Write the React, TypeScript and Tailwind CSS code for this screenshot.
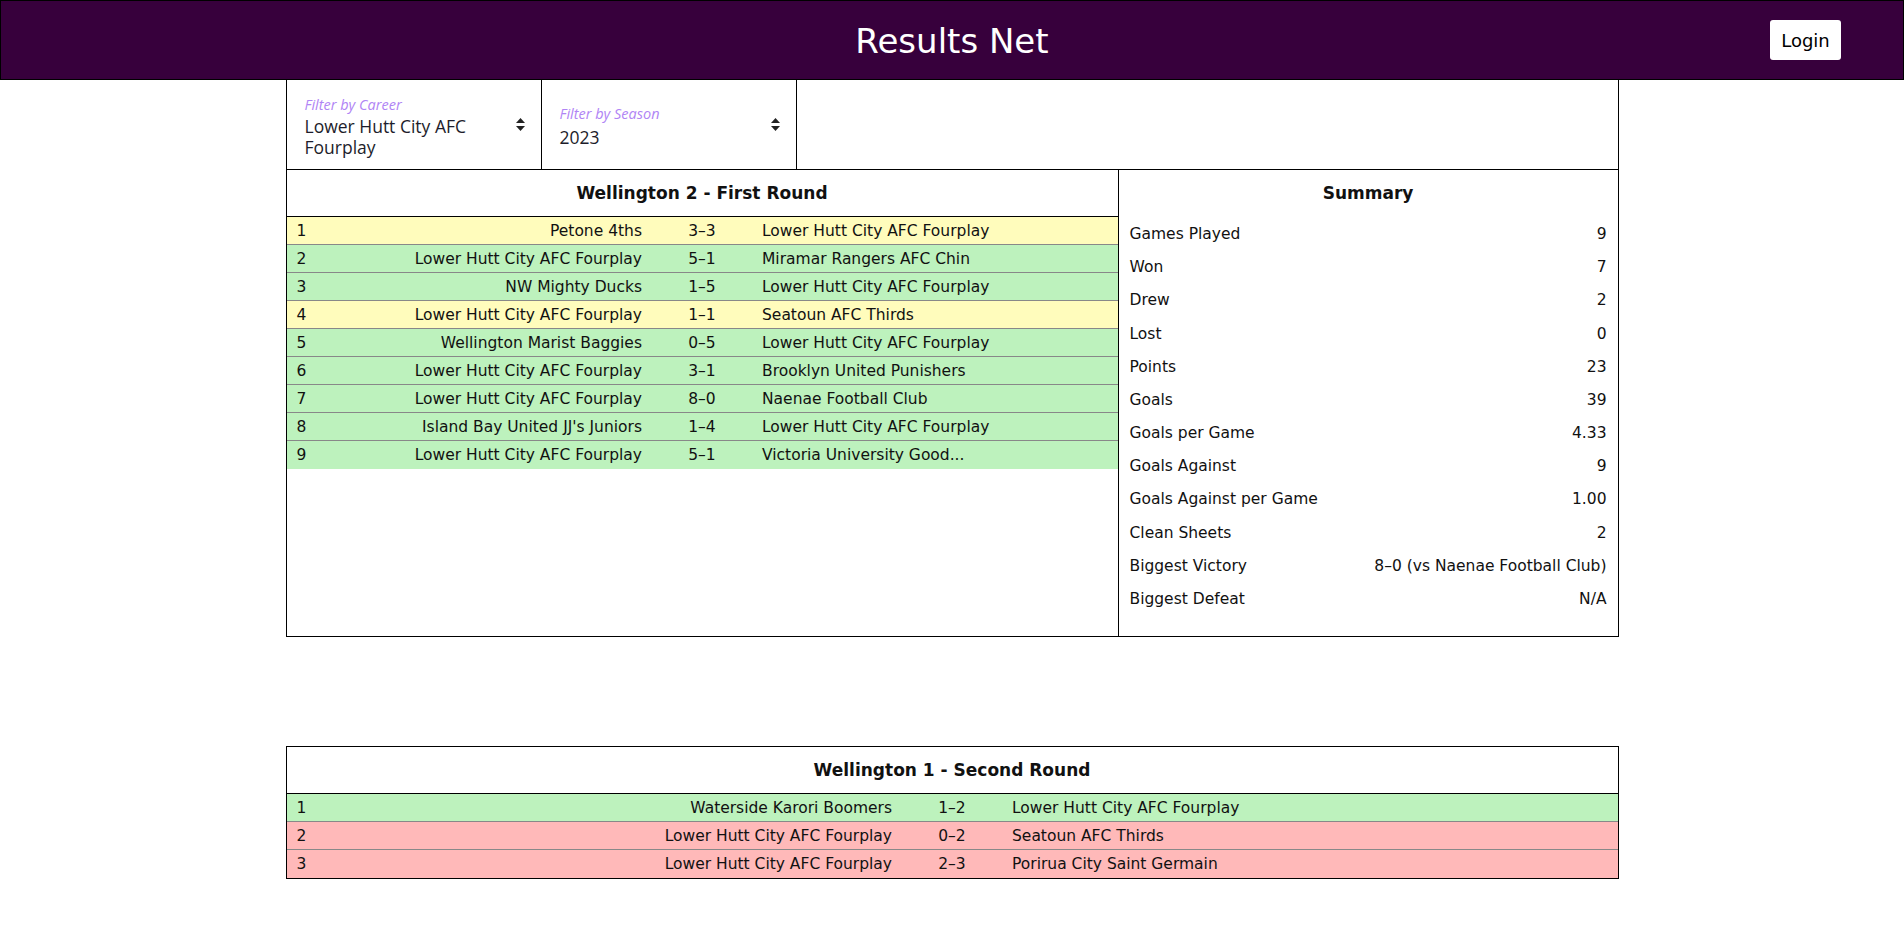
import React from "react";

type Match = { home: string; score: string; away: string; result: "W" | "D" | "L" };

const firstRound: Match[] = [
  { home: "Petone 4ths", score: "3–3", away: "Lower Hutt City AFC Fourplay", result: "D" },
  { home: "Lower Hutt City AFC Fourplay", score: "5–1", away: "Miramar Rangers AFC Chin", result: "W" },
  { home: "NW Mighty Ducks", score: "1–5", away: "Lower Hutt City AFC Fourplay", result: "W" },
  { home: "Lower Hutt City AFC Fourplay", score: "1–1", away: "Seatoun AFC Thirds", result: "D" },
  { home: "Wellington Marist Baggies", score: "0–5", away: "Lower Hutt City AFC Fourplay", result: "W" },
  { home: "Lower Hutt City AFC Fourplay", score: "3–1", away: "Brooklyn United Punishers", result: "W" },
  { home: "Lower Hutt City AFC Fourplay", score: "8–0", away: "Naenae Football Club", result: "W" },
  { home: "Island Bay United JJ's Juniors", score: "1–4", away: "Lower Hutt City AFC Fourplay", result: "W" },
  { home: "Lower Hutt City AFC Fourplay", score: "5–1", away: "Victoria University Good...", result: "W" },
];

const secondRound: Match[] = [
  { home: "Waterside Karori Boomers", score: "1–2", away: "Lower Hutt City AFC Fourplay", result: "W" },
  { home: "Lower Hutt City AFC Fourplay", score: "0–2", away: "Seatoun AFC Thirds", result: "L" },
  { home: "Lower Hutt City AFC Fourplay", score: "2–3", away: "Porirua City Saint Germain", result: "L" },
];

const summary = [
  ["Games Played", "9"],
  ["Won", "7"],
  ["Drew", "2"],
  ["Lost", "0"],
  ["Points", "23"],
  ["Goals", "39"],
  ["Goals per Game", "4.33"],
  ["Goals Against", "9"],
  ["Goals Against per Game", "1.00"],
  ["Clean Sheets", "2"],
  ["Biggest Victory", "8–0 (vs Naenae Football Club)"],
  ["Biggest Defeat", "N/A"],
];

function rowColor(r: Match["result"]) {
  if (r === "W") return "bg-[#bdf2bd]";
  if (r === "D") return "bg-[#fffcbc]";
  return "bg-[#ffb9b9]";
}

function SortArrows() {
  return (
    <svg width="9" height="13" viewBox="0 0 9 13" className="shrink-0">
      <path d="M4.5 0 L9 5 L0 5 Z" fill="#222" />
      <path d="M4.5 13 L9 8 L0 8 Z" fill="#222" />
    </svg>
  );
}

function MatchTable({ title, matches }: { title: string; matches: Match[] }) {
  return (
    <div>
      <div className="h-[47px] flex items-center justify-center border-b border-black font-bold text-[17px] pt-[1px]">
        {title}
      </div>
      {matches.map((m, i) => (
        <div key={i} className={`grid grid-cols-[1fr_100px_1fr] h-[28px] items-center border-b border-[#888] last:border-b-0 pt-[2px] ${rowColor(m.result)}`}>
          <div className="flex justify-between px-[10px]">
            <span>{i + 1}</span>
            <span className="truncate">{m.home}</span>
          </div>
          <div className="text-center">{m.score}</div>
          <div className="px-[10px] truncate">{m.away}</div>
        </div>
      ))}
    </div>
  );
}

export default function App() {
  return (
    <div className="min-h-screen bg-white text-[15.5px] text-[#111] font-['DejaVu_Sans',Verdana,sans-serif]">
      <header className="h-[80px] bg-[#37003c] border border-black flex items-center justify-center relative">
        <h1 className="text-white text-[34px] leading-none pt-[2px]">Results Net</h1>
        <button className="absolute right-[62px] top-[19px] w-[71px] h-[40px] bg-white rounded-[3px] text-[18px] text-black">
          Login
        </button>
      </header>

      <main className="w-[1333px] mx-auto">
        <div className="border-x border-b border-black">
          <div className="h-[90px] flex border-b border-black font-['Open_Sans','Noto_Sans',sans-serif]">
            <div className="w-[255px] border-r border-black flex items-center justify-between pl-[18px] pr-[16px]">
              <div className="pt-[4px]">
                <div className="text-[14.5px] italic text-[#b084f5] leading-[18px]">Filter by Career</div>
                <div className="mt-[2px] text-[17.5px] leading-[21px] text-[#1d1d2b]">
                  <div>Lower Hutt City AFC</div>
                  <div>Fourplay</div>
                </div>
              </div>
              <SortArrows />
            </div>
            <div className="w-[255px] border-r border-black flex items-center justify-between pl-[18px] pr-[16px]">
              <div className="pt-[4px]">
                <div className="text-[14.5px] italic text-[#b084f5] leading-[18px]">Filter by Season</div>
                <div className="mt-[3px] text-[17.5px] leading-[22px] text-[#1d1d2b]">2023</div>
              </div>
              <SortArrows />
            </div>
            <div className="flex-1" />
          </div>

          <div className="flex h-[466px]">
            <div className="w-[832px] border-r border-black">
              <MatchTable title="Wellington 2 - First Round" matches={firstRound} />
            </div>
            <div className="flex-1 px-[11px]">
              <div className="h-[47px] flex items-center justify-center font-bold text-[17px] pt-[1px]">Summary</div>
              <div className="flex flex-col pt-[1px]">
                {summary.map(([k, v]) => (
                  <div key={k} className="flex justify-between h-[33.2px] items-center">
                    <span>{k}</span>
                    <span>{v}</span>
                  </div>
                ))}
              </div>
            </div>
          </div>
        </div>

        <div className="mt-[109px] border border-black">
          <MatchTable title="Wellington 1 - Second Round" matches={secondRound} />
        </div>
      </main>
    </div>
  );
}
